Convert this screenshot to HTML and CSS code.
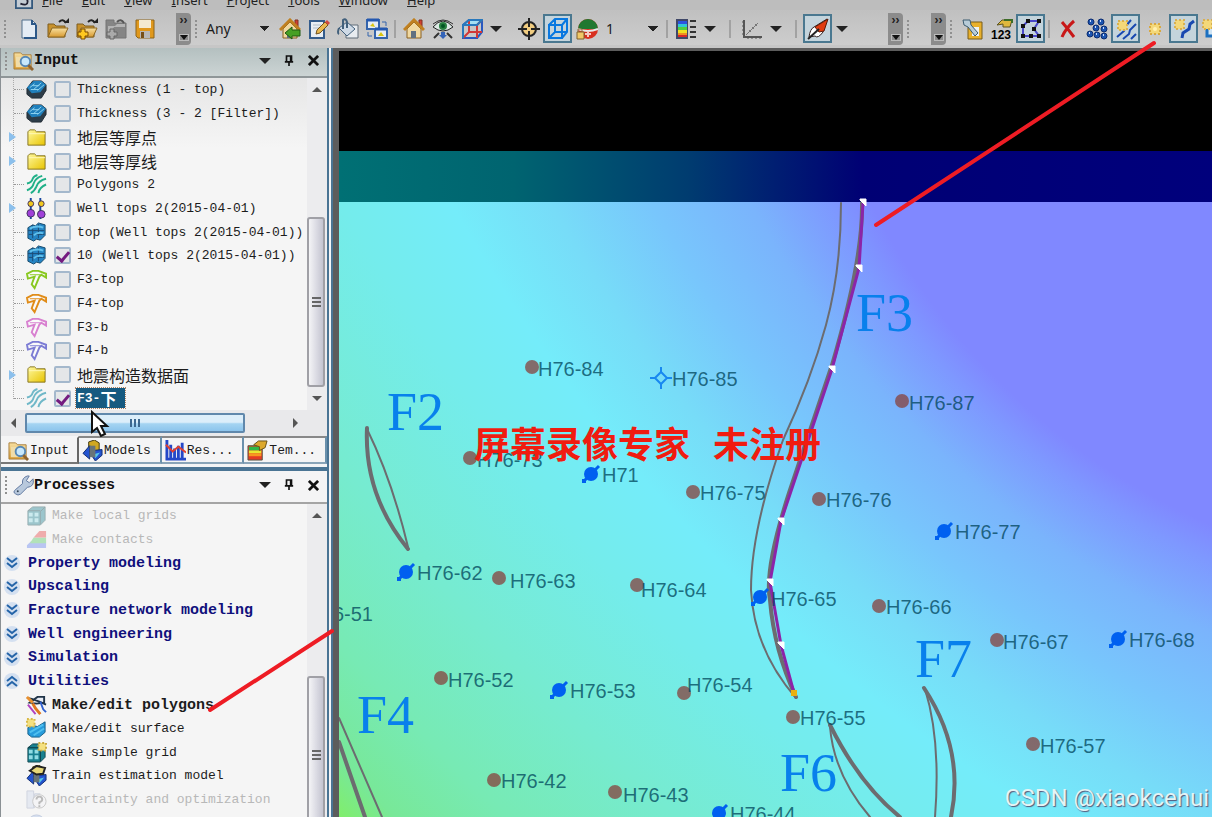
FILE: index.html
```
<!DOCTYPE html>
<html lang="en">
<head>
    <meta charset="utf-8">
    <title>Polygon editing</title>
    <link rel="stylesheet" href="styles.css">
</head>
<body>
    <!-- icon set -->
    <svg class="sprite" aria-hidden="true">
        <defs>
            <linearGradient id="gold" x1="0" y1="0" x2="0" y2="1"><stop offset="0" stop-color="#f8e0a0"/><stop offset="1" stop-color="#d89a30"/></linearGradient>
            <linearGradient id="yellow" x1="0" y1="0" x2="1" y2="1"><stop offset="0" stop-color="#fff9a0"/><stop offset="1" stop-color="#e8c400"/></linearGradient>
        </defs>
        <symbol id="i-new" viewBox="0 0 22 22"><path d="M4 2h10l4 4v14H4z" fill="#e4ecf4" stroke="#52708c"/><path d="M14 2v4h4M18 7v13H6" fill="none" stroke="#2c5888" stroke-width="2"/></symbol>
        <symbol id="i-open" viewBox="0 0 22 22"><path d="M1 19V6h6l2 2h9v11z" fill="#c8922c" stroke="#7c5c20"/><path d="M1 19l4-9h16l-4 9z" fill="url(#gold)" stroke="#8c6824"/><path d="M12 4q4-4 7 1" fill="none" stroke="#222" stroke-width="2"/><path d="M17 5h5V0z" fill="#222"/></symbol>
        <symbol id="i-plus" viewBox="0 0 22 22"><path d="M5 11h4v3h3v4H9v3H5v-3H2v-4h3z" fill="#ffc820" stroke="#7c4c00"/></symbol>
        <symbol id="i-gray" viewBox="0 0 22 22"><path d="M1 2h8v3h12v15H1z" fill="#858585" stroke="#747474"/><path d="M3 8h7l2-2h8v3H9l-4 9H3z" fill="#b4b4b4"/><path d="M5 11h4v3h3v4H9v3H5v-3H2v-4h3z" fill="#aaa" stroke="#666"/><path d="M12 4q4-4 7 1" fill="none" stroke="#555" stroke-width="2"/></symbol>
        <symbol id="i-save" viewBox="0 0 22 22"><path d="M2 2h18v18H4l-2-2z" fill="#e0981c" stroke="#8c641c"/><path d="M5 2h12v8H5z" fill="#f4ead0"/><path d="M6 13h10v7H6z" fill="#b8b8b8"/><path d="M7 14h3v6H7z" fill="#785018"/></symbol>
        <symbol id="i-home" viewBox="0 0 22 22"><path d="M16 2h3v8h-3z" fill="#d04030" stroke="#803020"/><path d="M4 11v9h14v-9l-7-7z" fill="#f0d8a0" stroke="#8a6020"/><path d="M1 12L11 2l10 10" fill="none" stroke="#c08020" stroke-width="3"/><path d="M8 13h5v7H8z" fill="#607080"/></symbol>
        <symbol id="i-homeadd" viewBox="0 0 22 22"><use href="#i-home"/><path d="M6 15l7-6v3h8v6h-8v3z" fill="#46a024" stroke="#205810"/></symbol>
        <symbol id="i-edit" viewBox="0 0 22 22"><path d="M2 3h14v17H2z" fill="#e8eef4" stroke="#345c8c" stroke-width="2"/><path d="M5 7h8M5 10h6" stroke="#b0bcc8"/><path d="M8 16l1-4 8-8 3 3-8 8z" fill="#e8b850" stroke="#70501c"/><path d="M17 4l2-2 3 3-2 2z" fill="#d04840"/></symbol>
        <symbol id="i-bucket" viewBox="0 0 22 22"><path d="M9 7h12v13H9z" fill="#e8ecf0" stroke="#606c78"/><path d="M2 10l8-6 8 7-8 7z" fill="#cfdae6" stroke="#42607c"/><path d="M6 11V2q3-2 4 2v6M2 10q-2 5 0 6" fill="none" stroke="#42607c" stroke-width="2"/></symbol>
        <symbol id="i-swap" viewBox="0 0 22 22"><path d="M1 2h12v9H1zM9 11h12v9H9z" fill="#e4ecf4" stroke="#3464ac" stroke-width="2"/><path d="M1 2h12M9 11h12" stroke="#2458b0" stroke-width="3"/><path d="M4 8l3-3 2 4zM12 18l3-4 3 4z" fill="#d8c410"/><path d="M16 4h4v4M2 14v4h4" fill="none" stroke="#3464ac"/></symbol>
        <symbol id="i-eye" viewBox="0 0 22 22"><path d="M1 9q10-12 20 0-10 8-20 0z" fill="#dce8e4" stroke="#222"/><path d="M1 6Q11-2 21 6" fill="none" stroke="#333"/><circle cx="11" cy="8" r="4" fill="#288040"/><circle cx="11" cy="8" r="2" fill="#052"/><path d="M2 20l5-5M20 20l-5-5" stroke="#333" stroke-width="2"/><path d="M9 14h4v3h2l-4 4-4-4h2z" fill="#3464b8"/></symbol>
        <symbol id="i-cube" viewBox="0 0 22 22"><path d="M2 7l6-5h13l-5 5z" fill="#a4e0f4"/><g fill="none" stroke-width="2"><path d="M2 7h14v13H2zM2 7l6-5h13v12l-5 6" stroke="#2858c0"/><path d="M2 20l6-6h13M8 2v12M16 20V7l5-5" stroke="#d03838"/><path d="M2 20V7h14l5-5H8L2 7" stroke="#2878bc"/></g></symbol>
        <symbol id="i-target" viewBox="0 0 22 22"><circle cx="11" cy="11" r="7" fill="#f0cc80" stroke="#222" stroke-width="2"/><path d="M11 0v9M11 13v9M0 11h9M13 11h9" stroke="#222" stroke-width="2"/></symbol>
        <symbol id="i-wire" viewBox="0 0 22 22"><path d="M2 7h13v13H2zM2 7l6-6h12v13l-5 6M15 7l5-6M8 1v13h12M8 14l-6 6" fill="none" stroke="#0878e0" stroke-width="2"/></symbol>
        <symbol id="i-globe" viewBox="0 0 22 22"><circle cx="12" cy="11" r="10" fill="#d83020"/><path d="M2 11a10 10 0 0 1 20 0z" fill="#207830"/><path d="M2 11q10 4 20 0" fill="none" stroke="#e8e8e8" stroke-width="2"/><path d="M9 16h6M12 13v6" stroke="#f4c8c0" stroke-width="2"/><path d="M1 14h7v7H1z" fill="#f0c868" stroke="#80602c"/><path d="M2 14v-3h4v3" fill="none" stroke="#886830"/></symbol>
        <symbol id="i-palette" viewBox="0 0 22 22"><path d="M1 1h12v20H1z" fill="#404868"/><path d="M3 3h9v3H3z" fill="#2c54e0"/><path d="M3 6h9v3H3z" fill="#30c8d8"/><path d="M3 9h9v3H3z" fill="#50d040"/><path d="M3 12h9v3H3z" fill="#f0e020"/><path d="M3 15h9v2H3z" fill="#f09020"/><path d="M3 17h9v2H3z" fill="#d82828"/><path d="M15 3h6M15 9h6M15 14h6M15 19h6" stroke="#333" stroke-width="2"/></symbol>
        <symbol id="i-axes" viewBox="0 0 22 22"><path d="M3 2v17h18" fill="none" stroke="#555" stroke-width="2"/><path d="M1 4h3M1 8h3M1 12h3M1 16h3M7 18v3M11 18v3M15 18v3M19 18v3" stroke="#555"/><path d="M5 17L17 5M8 12l2 2M11 9l2 2M14 6l2 2" stroke="#777"/></symbol>
        <symbol id="i-pen" viewBox="0 0 22 22"><path d="M2 19q1-8 5-10l13-8-4 13q-5 7-8 4z" fill="#fff" stroke="#302020"/><path d="M8 9L21 1l-4 12-5 1z" fill="#e03c10" stroke="#601c08"/><path d="M1 21L12 11" stroke="#222" stroke-width="2"/></symbol>
        <symbol id="i-wand" viewBox="0 0 22 22"><path d="M8 4h12v17H6V10z" fill="#e8b02c" stroke="#785c18"/><path d="M10 9h7v9h-7z" fill="#eef2f4"/><path d="M1 2h7l1 5 7 8-3 3-7-9-4-2z" fill="#b8ccd8" stroke="#3c5c70"/></symbol>
        <symbol id="i-num" viewBox="0 0 22 22"><path d="M6 7l5-5h10l-2 7h-7v-3z" fill="#dfb83c" stroke="#5c5420"/><path d="M13 2h8v3" fill="none" stroke="#3c6c28" stroke-width="2"/><text x="0" y="21" class="icon-num">123</text></symbol>
        <symbol id="i-nodes" viewBox="0 0 22 22"><path d="M3 18V8l5-5h11l-5 8 5 7z" fill="none" stroke="#4848c8" stroke-width="2"/><path d="M1 6h4v4H1zM6 1h4v4H6zM17 1h4v4h-4zM12 9h4v4h-4zM17 16h4v4h-4zM1 16h4v4H1zM9 16h4v4H9z" fill="#111"/></symbol>
        <symbol id="i-del" viewBox="0 0 22 22"><path d="M5 4q6 7 12 15M17 3Q9 10 5 19" fill="none" stroke="#c81818" stroke-width="3"/></symbol>
        <symbol id="i-dots" viewBox="0 0 22 22"><g fill="#1c54b0" stroke="#0c2c70"><circle cx="5" cy="4" r="3"/><circle cx="15" cy="4" r="3"/><circle cx="10" cy="10" r="3"/><circle cx="18" cy="11" r="3"/><circle cx="4" cy="16" r="3"/><circle cx="11" cy="17" r="3"/><circle cx="18" cy="18" r="3"/></g><path d="M4 3h1M14 3h1M9 9h1M17 10h1M3 15h1M10 16h1M17 17h1" stroke="#cdf" stroke-width="2"/></symbol>
        <symbol id="i-star" viewBox="0 0 22 22"><path d="M6 6h10v10H6z" fill="#f4d878"/><path d="M6 6h10v10H6z" fill="none" stroke="#d8a840" stroke-width="2" stroke-dasharray="2 2"/><circle cx="11" cy="11" r="2" fill="#fff0b0"/></symbol>
        <symbol id="i-lines" viewBox="0 0 22 22"><path d="M2 19l7-6 1-4 6-7M8 21l6-5 1-4 6-6M16 21l5-5" fill="none" stroke="#1848b0" stroke-width="2"/><path d="M3 3h9v9H3z" fill="#f4d878" stroke="#d8b050" stroke-width="2" stroke-dasharray="2 2"/></symbol>
        <symbol id="i-line" viewBox="0 0 22 22"><path d="M9 20l1-5 6-4 1-5 4-3" fill="none" stroke="#1848b0" stroke-width="3"/><path d="M2 2h9v9H2z" fill="#f4d878" stroke="#d8b050" stroke-width="2" stroke-dasharray="2 2"/></symbol>
        <symbol id="i-box" viewBox="0 0 22 22"><path d="M5 9v9h16V8" fill="#cfe4f4" stroke="#1c70c0" stroke-width="3"/><path d="M1 2h9v9H1z" fill="#f4d878" stroke="#d8b050" stroke-width="2" stroke-dasharray="2 2"/></symbol>
        <symbol id="i-search" viewBox="0 0 22 22"><path d="M1 20V3h7l2 2h9v15z" fill="url(#gold)" stroke="#a88040"/><path d="M3 7h15v11H3z" fill="#f0dca8"/><circle cx="13" cy="12" r="5" fill="#c8e8fc" stroke="#5888b4" stroke-width="2"/><path d="M16 16l5 5" stroke="#906430" stroke-width="3"/></symbol>
        <symbol id="i-wrench" viewBox="0 0 22 22"><path d="M3 20q-4-2 0-5l7-6q-1-6 5-8h2l-3 5 3 2 4-4q2 8-6 9l-7 7q-3 2-5 0z" fill="#b8c8dc" stroke="#6078a0"/><circle cx="5" cy="17" r="1" fill="#345"/></symbol>
        <symbol id="i-thick" viewBox="0 0 22 22"><path d="M1 10l6-8h9l5 4v6l-5 8H6l-5-4z" fill="#2c3c48" stroke="#222c34"/><path d="M1 9l7-7h8l5 4-6 8-9 1z" fill="#2080bc"/><path d="M4 9l5-4M8 11l8-7M12 12l7-6M7 7h7M5 11h8" stroke="#90d4f0"/></symbol>
        <symbol id="i-surf" viewBox="0 0 22 22"><path d="M2 6l5-3 3 1 3-3 7 2v11l-5 5-4-1-3 2-6-3z" fill="#2484c4" stroke="#184868"/><path d="M7 3v14M13 2v15M2 9h17M3 13h16" stroke="#1c4c74"/><path d="M4 7q7-4 14-1M8 14q5-4 10-2" fill="none" stroke="#60c0ec" stroke-width="2"/></symbol>
        <symbol id="i-folder" viewBox="0 0 22 22"><path d="M2 19V5l2-2h5l2 2h9v14z" fill="url(#yellow)" stroke="#847424"/><path d="M3 7h17" stroke="#fff8b8"/></symbol>
        <symbol id="i-waves" viewBox="0 0 22 22"><path d="M1 10q5-1 6-5 1-3 5-4M1 17q6-2 7-7 2-6 9-8M5 20q4-2 6-7 2-6 10-8M13 20q1-6 8-9" fill="none" stroke="currentColor" stroke-width="2"/></symbol>
        <symbol id="i-tops" viewBox="0 0 22 22"><path d="M5 0v22M15 0v22" stroke="#1848a0" stroke-width="2"/><g stroke="#403060"><circle cx="5" cy="6" r="3" fill="#f0c820"/><circle cx="16" cy="6" r="3" fill="#f0c820"/><circle cx="5" cy="16" r="4" fill="#a040d8"/><circle cx="16" cy="17" r="4" fill="#a040d8"/></g></symbol>
        <symbol id="i-fault" viewBox="0 0 22 22"><path d="M1 5l6-3h6l8 3v4l-5-3-2 2-5 12-3-4 3-8-7 2z" fill="#fff" fill-opacity=".5" stroke="currentColor" stroke-width="2"/><path d="M4 6h11" stroke="currentColor"/></symbol>
        <symbol id="i-models" viewBox="0 0 22 22"><path d="M7 2l6-2 5 3v9H7z" fill="#d0a820" stroke="#403810"/><path d="M1 14l7-8v14zM12 11l9-1v6l-7 6-4-6z" fill="#2454d0" stroke="#102c70"/><path d="M12 15l7-2-5 6z" fill="#58c8e8"/><path d="M8 6h6v12H8z" fill="#687478"/></symbol>
        <symbol id="i-res" viewBox="0 0 22 22"><path d="M2 0v20h20M6 20V5M10 20V9M14 20V6M18 20V3" fill="none" stroke="#2448c8" stroke-width="3"/><path d="M1 5l7 7 6-5 8 6" fill="none" stroke="#e04030" stroke-width="2"/></symbol>
        <symbol id="i-tem" viewBox="0 0 22 22"><path d="M1 6h15v15H1z" fill="#e43c24" stroke="#554"/><path d="M2 7h13v4H2z" fill="#30b848"/><path d="M2 11h13v3H2z" fill="#e8e830"/><path d="M2 14h13v3H2z" fill="#f89820"/><path d="M7 5l5-4h9l-2 7-6 3V7z" fill="#dca82c" stroke="#665018"/></symbol>
        <symbol id="i-grid" viewBox="0 0 22 22"><path d="M2 6l5-4h13v14l-5 5H2z" fill="#188090" stroke="#124850"/><path d="M3 8h4v4H3zM9 8h4v4H9zM3 14h4v4H3zM9 14h4v4H9z" fill="#90dce4"/><path d="M15 7l5-5M15 7v13M2 6h13" stroke="#0c3840"/></symbol>
        <symbol id="i-contacts" viewBox="0 0 22 22"><path d="M1 20v-3l4-4h16v7z" fill="#6080f0"/><path d="M4 15l4-6h13v6z" fill="#50c860"/><path d="M8 9l6-7h7v7z" fill="#e84040"/></symbol>
        <symbol id="i-poly" viewBox="0 0 22 22"><path d="M1 3l5 1 8 3 7 3M4 8l8-6h7v6l-8 1z" fill="#e8ecf4" stroke="#203448" stroke-width="2"/><path d="M2 10l8 10" stroke="#b040c0" stroke-width="2"/><path d="M7 9l3 5 5 6" fill="none" stroke="#e07820" stroke-width="3"/><path d="M15 7l3 8 3 3" fill="none" stroke="#3060d0" stroke-width="2"/><path d="M1 2l6 6" stroke="#e89030" stroke-width="3"/></symbol>
        <symbol id="i-mksurf" viewBox="0 0 22 22"><path d="M2 10l6-2 4 1 8-5v11l-6 5H6l-4-3z" fill="#289cdc" stroke="#186088"/><path d="M4 15l14-8M8 18l11-7" stroke="#50c0f0" stroke-width="2"/><path d="M1 1h8v8H1z" fill="#f4e080" stroke="#d8b848" stroke-width="2" stroke-dasharray="2 2"/></symbol>
        <symbol id="i-mkgrid" viewBox="0 0 22 22"><use href="#i-grid"/><path d="M13 1h8v8h-8z" fill="#f4e080" stroke="#c8a840" stroke-width="2" stroke-dasharray="2 2"/></symbol>
        <symbol id="i-train" viewBox="0 0 22 22"><use href="#i-models"/><path d="M4 6l7-5 9 2-2 6-7 1z" fill="#e8d878" stroke="#222" stroke-width="2"/></symbol>
        <symbol id="i-unc" viewBox="0 0 22 22"><path d="M1 20V2h7v18zM9 20V5h6" fill="#cfd8ec" stroke="#98a4c0"/><circle cx="14" cy="13" r="7" fill="#f4f4f8" stroke="#888"/><path d="M11 11q0-3 3-3t3 3q0 2-3 3v2M14 17v2" fill="none" stroke="#666" stroke-width="2"/></symbol>
        <symbol id="i-ball" viewBox="0 0 22 22"><circle cx="11" cy="11" r="9" fill="#a8c0e8" stroke="#7890c0"/></symbol>
        <symbol id="i-down" viewBox="0 0 18 18"><circle cx="9" cy="9" r="8" fill="#d4e0f0"/><path d="M4 4l5 4 5-4M4 9l5 4 5-4" fill="none" stroke="#2464a8" stroke-width="2"/></symbol>
        <symbol id="i-up" viewBox="0 0 18 18"><circle cx="9" cy="9" r="8" fill="#d4e0f0"/><path d="M4 9l5-4 5 4M4 14l5-4 5 4" fill="none" stroke="#2464a8" stroke-width="2"/></symbol>
        <symbol id="i-pin" viewBox="0 0 12 14"><path d="M3 1h6v7H3zM1 8h10M6 8v5M8 1v7" fill="none" stroke="#111" stroke-width="2"/></symbol>
        <symbol id="i-close" viewBox="0 0 12 12"><path d="M1 1l10 10M11 1L1 11" stroke="#111" stroke-width="3"/></symbol>
        <symbol id="w-oil" viewBox="-12 -12 24 24"><circle r="7" fill="#87413c" fill-opacity=".75"/></symbol>
        <symbol id="w-inj" viewBox="-12 -12 24 24"><circle r="7" fill="#0060f0"/><path d="M-8 8L8-8" stroke="#0060f0" stroke-width="3"/><path d="M-9 5h4v4h-4z" fill="#0060f0"/></symbol>
    </svg>

    <nav class="menubar">
        <svg class="app-icon" viewBox="0 0 20 20"><path d="M1 1h18v18H1z" fill="#c4ccd4" stroke="#34587c" stroke-width="2"/><path d="M6 14q8 3 8-2t-6-3" fill="none" stroke="#223" stroke-width="2"/></svg>
        <a href="#"><u>F</u>ile</a>
        <a href="#"><u>E</u>dit</a>
        <a href="#"><u>V</u>iew</a>
        <a href="#"><u>I</u>nsert</a>
        <a href="#"><u>P</u>roject</a>
        <a href="#"><u>T</u>ools</a>
        <a href="#"><u>W</u>indow</a>
        <a href="#"><u>H</u>elp</a>
    </nav>

    <div class="toolbars">
        <div class="toolbar">
            <span class="grip"></span>
            <button aria-label="New"><svg><use href="#i-new"/></svg></button>
            <button aria-label="Open"><svg><use href="#i-open"/></svg></button>
            <button aria-label="Import"><svg><use href="#i-open"/><use href="#i-plus"/></svg></button>
            <button aria-label="Add" disabled><svg><use href="#i-gray"/></svg></button>
            <button aria-label="Save"><svg><use href="#i-save"/></svg></button>
            <button class="overflow" aria-label="More file tools"></button>
        </div>
        <div class="toolbar">
            <span class="grip"></span>
            <select class="pick-any" aria-label="Filter"><option>Any</option></select>
            <button aria-label="Add home"><svg><use href="#i-homeadd"/></svg></button>
            <button aria-label="Edit view"><svg><use href="#i-edit"/></svg></button>
            <button aria-label="Background"><svg><use href="#i-bucket"/></svg></button>
            <button aria-label="Copy view"><svg><use href="#i-swap"/></svg></button>
            <span class="sep"></span>
            <button aria-label="Home"><svg><use href="#i-home"/></svg></button>
            <button aria-label="View all"><svg><use href="#i-eye"/></svg></button>
            <button aria-label="View from"><svg><use href="#i-cube"/></svg></button>
            <button class="drop" aria-label="View options"></button>
            <span class="sep blank"></span>
            <button aria-label="Set focus"><svg><use href="#i-target"/></svg></button>
            <button class="on" aria-label="Wireframe"><svg><use href="#i-wire"/></svg></button>
            <button aria-label="Vertical scale"><svg><use href="#i-globe"/></svg></button>
            <select class="pick-scale" aria-label="Scale"><option>1</option></select>
            <span class="sep"></span>
            <button aria-label="Legend"><svg><use href="#i-palette"/></svg></button>
            <button class="drop" aria-label="Legend options"></button>
            <span class="sep wide"></span>
            <button aria-label="Axes"><svg><use href="#i-axes"/></svg></button>
            <button class="drop" aria-label="Axes options"></button>
            <span class="sep wide"></span>
            <button class="on" aria-label="North arrow"><svg><use href="#i-pen"/></svg></button>
            <button class="drop" aria-label="Arrow options"></button>
            <button class="overflow" aria-label="More view tools"></button>
        </div>
        <div class="toolbar">
            <span class="grip"></span>
            <button class="overflow" aria-label="More tools"></button>
        </div>
        <div class="toolbar">
            <span class="grip"></span>
            <button aria-label="Select"><svg><use href="#i-wand"/></svg></button>
            <button aria-label="Numbers"><svg><use href="#i-num"/></svg></button>
            <button class="on" aria-label="Edit nodes"><svg><use href="#i-nodes"/></svg></button>
            <span class="sep"></span>
            <button aria-label="Delete"><svg><use href="#i-del"/></svg></button>
            <button aria-label="Points"><svg><use href="#i-dots"/></svg></button>
            <button class="on" aria-label="Add lines"><svg><use href="#i-lines"/></svg></button>
            <button aria-label="New point"><svg><use href="#i-star"/></svg></button>
            <button class="on" aria-label="Add to line"><svg><use href="#i-line"/></svg></button>
            <button aria-label="New box"><svg><use href="#i-box"/></svg></button>
        </div>
    </div>

    <main class="workspace">
        <div class="side">
            <section class="panel input">
                <header>
                    <span class="grip"></span>
                    <svg class="icon"><use href="#i-search"/></svg>
                    <h2>Input</h2>
                    <button class="drop" aria-label="Input options"></button>
                    <button aria-label="Pin input"><svg class="pin"><use href="#i-pin"/></svg></button>
                    <button aria-label="Close input"><svg class="close"><use href="#i-close"/></svg></button>
                </header>
                <div class="scroll">
                    <ul class="tree">
                        <li><svg class="icon"><use href="#i-thick"/></svg><label><input type="checkbox"><span>Thickness (1 - top)</span></label></li>
                        <li><svg class="icon"><use href="#i-thick"/></svg><label><input type="checkbox"><span>Thickness (3 - 2 [Filter])</span></label></li>
                        <li class="parent"><svg class="icon"><use href="#i-folder"/></svg><label><input type="checkbox"><span class="cjk">地层等厚点</span></label></li>
                        <li class="parent"><svg class="icon"><use href="#i-folder"/></svg><label><input type="checkbox"><span class="cjk">地层等厚线</span></label></li>
                        <li><svg class="icon green"><use href="#i-waves"/></svg><label><input type="checkbox"><span>Polygons 2</span></label></li>
                        <li class="parent"><svg class="icon"><use href="#i-tops"/></svg><label><input type="checkbox"><span>Well tops 2(2015-04-01)</span></label></li>
                        <li><svg class="icon"><use href="#i-surf"/></svg><label><input type="checkbox"><span>top (Well tops 2(2015-04-01))</span></label></li>
                        <li><svg class="icon"><use href="#i-surf"/></svg><label><input type="checkbox" checked><span>10 (Well tops 2(2015-04-01))</span></label></li>
                        <li><svg class="icon lime"><use href="#i-fault"/></svg><label><input type="checkbox"><span>F3-top</span></label></li>
                        <li><svg class="icon orange"><use href="#i-fault"/></svg><label><input type="checkbox"><span>F4-top</span></label></li>
                        <li><svg class="icon pink"><use href="#i-fault"/></svg><label><input type="checkbox"><span>F3-b</span></label></li>
                        <li><svg class="icon violet"><use href="#i-fault"/></svg><label><input type="checkbox"><span>F4-b</span></label></li>
                        <li class="parent"><svg class="icon"><use href="#i-folder"/></svg><label><input type="checkbox"><span class="cjk">地震构造数据面</span></label></li>
                        <li><svg class="icon aqua"><use href="#i-waves"/></svg><label><input type="checkbox" checked><span class="selected">F3-<span class="cjk">下</span></span></label></li>
                    </ul>
                    <div class="vbar"><i class="up"></i><b class="space"></b><b class="thumb"></b><i class="down"></i></div>
                </div>
                <div class="hbar"><i class="left"></i><b class="thumb"></b><b class="space"></b><i class="right"></i></div>
                <div class="tabs">
                    <button class="active"><svg class="icon"><use href="#i-search"/></svg>Input</button>
                    <button><svg class="icon"><use href="#i-models"/></svg>Models</button>
                    <button><svg class="icon"><use href="#i-res"/></svg>Res...</button>
                    <button><svg class="icon"><use href="#i-tem"/></svg>Tem...</button>
                </div>
            </section>

            <section class="panel processes">
                <header>
                    <span class="grip"></span>
                    <svg class="icon"><use href="#i-wrench"/></svg>
                    <h2>Processes</h2>
                    <button class="drop" aria-label="Process options"></button>
                    <button aria-label="Pin processes"><svg class="pin"><use href="#i-pin"/></svg></button>
                    <button aria-label="Close processes"><svg class="close"><use href="#i-close"/></svg></button>
                </header>
                <div class="scroll">
                    <ul class="steps">
                        <li class="off"><svg class="icon"><use href="#i-grid"/></svg>Make local grids</li>
                        <li class="off"><svg class="icon"><use href="#i-contacts"/></svg>Make contacts</li>
                        <li class="group"><svg class="fold"><use href="#i-down"/></svg>Property modeling</li>
                        <li class="group"><svg class="fold"><use href="#i-down"/></svg>Upscaling</li>
                        <li class="group"><svg class="fold"><use href="#i-down"/></svg>Fracture network modeling</li>
                        <li class="group"><svg class="fold"><use href="#i-down"/></svg>Well engineering</li>
                        <li class="group"><svg class="fold"><use href="#i-down"/></svg>Simulation</li>
                        <li class="group"><svg class="fold"><use href="#i-up"/></svg>Utilities</li>
                        <li class="current"><svg class="icon"><use href="#i-poly"/></svg>Make/edit polygons</li>
                        <li><svg class="icon"><use href="#i-mksurf"/></svg>Make/edit surface</li>
                        <li><svg class="icon"><use href="#i-mkgrid"/></svg>Make simple grid</li>
                        <li><svg class="icon"><use href="#i-train"/></svg>Train estimation model</li>
                        <li class="off"><svg class="icon"><use href="#i-unc"/></svg>Uncertainty and optimization</li>
                        <li class="off"><svg class="icon"><use href="#i-ball"/></svg>Volume calculation</li>
                    </ul>
                    <div class="vbar"><i class="up"></i><b class="space"></b><b class="thumb"></b></div>
                </div>
            </section>
        </div>

        <div class="map">
            <svg viewBox="339 51 873 766" preserveAspectRatio="xMinYMin slice">
                <defs>
                    <radialGradient id="depth" gradientUnits="userSpaceOnUse" cx="2480" cy="-1300" r="3010" fx="1480" fy="-100" fr="680">
                        <stop offset="0" stop-color="#8088ff"/>
                        <stop offset="0.04" stop-color="#7e98ff"/>
                        <stop offset="0.12" stop-color="#7ab4fc"/>
                        <stop offset="0.22" stop-color="#78c6fc"/>
                        <stop offset="0.32" stop-color="#77dcf8"/>
                        <stop offset="0.42" stop-color="#74ecfa"/>
                        <stop offset="0.53" stop-color="#74ecec"/>
                        <stop offset="0.7" stop-color="#76ebd0"/>
                        <stop offset="0.85" stop-color="#77eab4"/>
                        <stop offset="0.95" stop-color="#78e898"/>
                        <stop offset="1" stop-color="#80ee6c"/>
                    </radialGradient>
                    <linearGradient id="edge">
                        <stop offset="0" stop-color="#007074"/>
                        <stop offset="0.2" stop-color="#006470"/>
                        <stop offset="0.4" stop-color="#003c70"/>
                        <stop offset="0.6" stop-color="#000074"/>
                        <stop offset="1" stop-color="#00007c"/>
                    </linearGradient>
                </defs>
                <rect x="339" y="151" width="873" height="52" fill="url(#edge)"/>
                <rect x="339" y="202" width="873" height="615" fill="url(#depth)"/>

                <!-- fault traces -->
                <g class="fault thin">
                    <path d="M841 203Q841 270 826 325T783 440Q751 530 751 590 754 650 796 698"/>
                    <path d="M367 429Q392 480 408 547"/>
                    <path d="M339 718L382 817"/>
                    <path d="M830 727Q834 775 870 817"/>
                    <path d="M925 689Q941 740 935 817"/>
                </g>
                <g class="fault">
                    <path d="M862 203Q863 260 832 365L789 493Q764 570 770 600 774 650 796 697"/>
                    <path d="M367 428Q364 495 408 549"/>
                    <path d="M339 742L365 817"/>
                    <path d="M830 725Q860 785 900 817"/>
                    <path d="M924 688Q965 750 951 817"/>
                </g>
                <polyline class="edited" points="863,203 859,268 832,369 781,521 770,582 781,645 794,693"/>
                <path class="handles" d="M860 199h6v7l-6-6zM856 265h6v7l-6-6zM829 366h6v7l-6-6zM778 518h6v7l-6-6zM767 579h6v7l-6-6zM778 642h6v7l-6-6z"/>
                <rect x="791" y="690" width="6" height="6" fill="#e8b010"/>

                <g class="names">
                    <text x="387" y="430">F2</text>
                    <text x="856" y="331">F3</text>
                    <text x="357" y="733">F4</text>
                    <text x="780" y="791">F6</text>
                    <text x="915" y="677">F7</text>
                </g>

                <g class="wells">
                    <use href="#w-oil" x="520" y="355" width="24" height="24"/><text x="538" y="376">H76-84</text>
                    <use href="#w-oil" x="458" y="446" width="24" height="24"/><text x="477" y="467">H76-73</text>
                    <use href="#w-oil" x="681" y="480" width="24" height="24"/><text x="700" y="500">H76-75</text>
                    <use href="#w-oil" x="807" y="487" width="24" height="24"/><text x="826" y="507">H76-76</text>
                    <use href="#w-oil" x="890" y="389" width="24" height="24"/><text x="909" y="410">H76-87</text>
                    <use href="#w-oil" x="487" y="566" width="24" height="24"/><text x="510" y="588">H76-63</text>
                    <use href="#w-oil" x="625" y="573" width="24" height="24"/><text x="641" y="597">H76-64</text>
                    <use href="#w-oil" x="867" y="594" width="24" height="24"/><text x="886" y="614">H76-66</text>
                    <use href="#w-oil" x="985" y="628" width="24" height="24"/><text x="1003" y="649">H76-67</text>
                    <use href="#w-oil" x="429" y="666" width="24" height="24"/><text x="448" y="687">H76-52</text>
                    <use href="#w-oil" x="672" y="681" width="24" height="24"/><text x="687" y="692">H76-54</text>
                    <use href="#w-oil" x="781" y="705" width="24" height="24"/><text x="800" y="725">H76-55</text>
                    <use href="#w-oil" x="1021" y="732" width="24" height="24"/><text x="1040" y="753">H76-57</text>
                    <use href="#w-oil" x="482" y="768" width="24" height="24"/><text x="501" y="788">H76-42</text>
                    <use href="#w-oil" x="603" y="780" width="24" height="24"/><text x="623" y="802">H76-43</text>
                    <use href="#w-inj" x="579" y="462" width="24" height="24"/><text x="602" y="482">H71</text>
                    <use href="#w-inj" x="394" y="560" width="24" height="24"/><text x="417" y="580">H76-62</text>
                    <use href="#w-inj" x="748" y="585" width="24" height="24"/><text x="771" y="606">H76-65</text>
                    <use href="#w-inj" x="932" y="519" width="24" height="24"/><text x="955" y="539">H76-77</text>
                    <use href="#w-inj" x="1106" y="627" width="24" height="24"/><text x="1129" y="647">H76-68</text>
                    <use href="#w-inj" x="547" y="678" width="24" height="24"/><text x="570" y="698">H76-53</text>
                    <use href="#w-inj" x="707" y="801" width="24" height="24"/><text x="730" y="821">H76-44</text>
                    <text x="373" y="621" text-anchor="end">H76-51</text>
                    <path d="M661 367v5M661 383v6M650 378h5M667 378h5M655 378l6-6 6 6-6 6z" fill="none" stroke="#1888f0" stroke-width="2"/><text x="672" y="386">H76-85</text>
                </g>

                <g class="recorder">
                    <text x="474" y="458">屏幕录像专家</text>
                    <text x="713" y="458">未注册</text>
                </g>
            </svg>
            <span class="credit">CSDN @xiaokcehui</span>
        </div>
    </main>

    <!-- red pointer lines and mouse cursor over the window -->
    <svg class="notes" aria-hidden="true">
        <path d="M210 710L332 631M876 225L1154 43" stroke="#ee1c24" stroke-width="4" stroke-linecap="round"/>
        <path d="M92 412v20l5-4 4 8 4-2-4-8h6z" fill="#fff" stroke="#111" stroke-width="2"/>
    </svg>
</body>
</html>
```
FILE: styles.css
```
* {
    box-sizing: border-box;
}
body {
    margin: 0;
    height: 100vh;
    display: flex;
    flex-direction: column;
    overflow: hidden;
    position: relative;
    background: #c6c6c6;
    color: #1c1c1c;
    font-family: "Liberation Mono", "Noto Sans CJK SC", monospace;
    font-size: 13px;
}
button, select {
    font: inherit;
    color: inherit;
    border: 0;
    padding: 0;
    background: none;
}
ul {
    list-style: none;
    margin: 0;
    padding: 0;
}
.sprite {
    position: absolute;
    width: 0;
    height: 0;
}
.icon-num {
    font: bold 12px "Liberation Sans", sans-serif;
}

/* menu, scrolled half out of the window */
.menubar {
    display: flex;
    align-items: center;
    gap: 19px;
    height: 20px;
    margin-top: -10px;
    padding-left: 15px;
    background: #bdbdbd;
    font-family: "Noto Sans", sans-serif;
    flex: none;
}
.menubar a {
    color: #222;
    text-decoration: none;
    line-height: 20px;
}
.app-icon {
    width: 18px;
    height: 18px;
    margin-right: -10px;
}

/* toolbars */
.toolbars {
    display: grid;
    grid-template-columns: 191px 712px 43px 1fr;
    height: 35px;
    flex: none;
    background: linear-gradient(#c0c0c0, #cdcdcd);
    overflow: hidden;
}
.toolbar {
    display: flex;
    align-items: center;
    padding-top: 2px;
    min-width: 0;
}
.grip {
    flex: none;
    width: 2px;
    height: 18px;
    margin: 0 6px 0 4px;
    background: repeating-linear-gradient(#909090 0 2px, transparent 2px 4px);
}
.toolbar:first-child .grip {
    margin-right: 8px;
}
.toolbar button {
    flex: none;
    width: 29px;
    height: 29px;
    display: flex;
    align-items: center;
    justify-content: center;
}
.toolbar svg {
    width: 22px;
    height: 22px;
}
.toolbar .on {
    border: 2px solid #4a7890;
    background: #c4d4dc;
}
.drop::before {
    content: "";
    border: 6px solid transparent;
    border-top-color: #222;
    border-bottom: 0;
}
.toolbar .drop {
    width: 20px;
}
.toolbar .overflow {
    width: 15px;
    height: 32px;
    margin-left: auto;
    flex-direction: column;
    justify-content: space-between;
    padding: 3px 0 5px;
    background: #8c8c8c;
    border-radius: 0 4px 4px 0;
}
.overflow::before {
    content: "››";
    font: bold 12px/9px "Liberation Sans", sans-serif;
}
.overflow::after {
    content: "";
    border: 4px solid transparent;
    border-top: 5px solid #111;
    border-bottom: 0;
    outline: 1px solid #bbb;
}
.sep {
    flex: none;
    width: 2px;
    height: 18px;
    margin: 0 3px;
    background: #a2a2a2;
}
.sep.wide {
    margin: 0 6px 0 9px;
}
.sep.blank {
    background: none;
}
.toolbar select {
    appearance: none;
    flex: none;
    height: 24px;
    font-family: "Noto Sans", sans-serif;
    font-size: 14px;
    background:
        linear-gradient(45deg, transparent 50%, #222 50%) right 10px top 9px / 5px 5px no-repeat,
        linear-gradient(-45deg, transparent 50%, #222 50%) right 5px top 9px / 5px 5px no-repeat;
}
.pick-any {
    width: 72px;
    padding-left: 3px;
}
.pick-scale {
    width: 62px;
    padding-left: 5px;
}

/* side panels */
.workspace {
    flex: 1;
    min-height: 0;
    margin-top: 3px;
    display: grid;
    grid-template-columns: 333px 1fr;
}
.side {
    display: grid;
    grid-template-rows: 23fr 19fr;
    min-height: 0;
    border-left: 1px solid #8a9094;
    border-right: 6px double #4a7494;
    background: #f4f4f5;
}
.panel {
    display: flex;
    flex-direction: column;
    min-height: 0;
    min-width: 0;
}
.panel header {
    display: flex;
    align-items: center;
    flex: none;
    height: 30px;
    padding: 0 2px 3px 0;
    border-bottom: 2px solid #8f9698;
    background: linear-gradient(#b4c0c0, #ccd4d4);
}
.processes header {
    height: 35px;
    border-top: 2px solid #4a7494;
    border-bottom-color: #a4a4a4;
    background: #f4f4f5;
}
.panel h2 {
    flex: 1;
    margin: 0;
    font-size: 15px;
    color: #111;
}
.panel header button {
    width: 24px;
    height: 20px;
    display: flex;
    align-items: center;
    justify-content: center;
}
.icon {
    width: 21px;
    height: 21px;
    flex: none;
}
.pin {
    width: 10px;
    height: 12px;
}
.close {
    width: 11px;
    height: 11px;
}
.scroll {
    flex: 1;
    min-height: 0;
    display: grid;
    grid-template-columns: 1fr 20px;
    background: linear-gradient(#e6e6e6, #f5f5f5 70px);
    overflow: hidden;
}
.tree, .steps {
    display: grid;
    grid-auto-rows: 1fr;
    min-width: 0;
    min-height: 0;
}
.tree {
    background: repeating-linear-gradient(#aaa 0 1px, transparent 1px 2px) 12px 0 / 1px 97% no-repeat;
}
.tree li {
    display: flex;
    align-items: center;
    min-height: 0;
    white-space: nowrap;
}
.tree li::before {
    content: "";
    width: 10px;
    margin: 0 2px 0 13px;
    border-top: 1px dotted #999;
}
.tree .parent::before {
    width: 0;
    height: 0;
    margin: 0 10px 0 8px;
    border: 5px solid transparent;
    border-left: 7px solid #8cc0ec;
    border-right: 0;
}
.tree label {
    display: flex;
    align-items: center;
    gap: 6px;
    margin-left: 7px;
}
.tree input {
    appearance: none;
    flex: none;
    width: 17px;
    height: 17px;
    margin: 0;
    border: 2px solid #a4b8cc;
    border-radius: 2px;
    background: #e4e6e8;
    display: grid;
    place-items: center;
}
.tree input:checked::before {
    content: "";
    width: 5px;
    height: 10px;
    border: solid #741c80;
    border-width: 0 3px 3px 0;
    transform: rotate(40deg);
}
.cjk {
    font-family: "Noto Sans CJK SC", sans-serif;
    font-size: 16px;
    line-height: 20px;
}
.selected {
    display: flex;
    align-items: center;
    height: 20px;
    margin-left: -1px;
    padding: 0 9px 0 1px;
    background: #165a80;
    color: #fff;
    font-weight: bold;
    outline: 1px dotted #b08060;
}
.green { color: #20b088; }
.aqua { color: #70b8c8; }
.lime { color: #88c820; }
.orange { color: #e08c18; }
.pink { color: #d880d0; }
.violet { color: #7c7cd4; }

/* scroll bars */
.vbar {
    display: flex;
    flex-direction: column;
    background: #ececee;
    min-height: 0;
}
.vbar i, .hbar i {
    flex: none;
    display: grid;
    place-items: center;
}
.vbar i {
    height: 23px;
}
.vbar i::before, .hbar i::before {
    content: "";
    border: 5px solid transparent;
}
.vbar .up::before {
    border-bottom-color: #555;
    border-top: 0;
}
.vbar .down::before {
    border-top-color: #555;
    border-bottom: 0;
}
.vbar .space {
    flex: 118;
}
.vbar .thumb {
    flex: 168;
    width: 18px;
    border: 2px solid #a0a0a6;
    border-radius: 3px;
    background: linear-gradient(90deg, #f4f4f6, #dcdce4 50%, #c4c4d0);
    display: grid;
    place-items: center;
}
.vbar .thumb::before {
    content: "";
    width: 9px;
    height: 11px;
    background: repeating-linear-gradient(#666 0 2px, transparent 2px 4px);
}
.hbar {
    flex: none;
    display: flex;
    height: 26px;
    padding: 3px 20px 3px 0;
    background: #e9e9eb;
}
.hbar i {
    width: 24px;
}
.hbar .left::before {
    border-right-color: #555;
    border-left: 0;
}
.hbar .right::before {
    border-left-color: #555;
    border-right: 0;
}
.hbar .thumb {
    flex: 218;
    border: 2px solid #6088ac;
    border-radius: 2px;
    background: linear-gradient(#dceefa 45%, #a4d4f2 55%, #8cc4ec);
    display: grid;
    place-items: center;
}
.hbar .thumb::before {
    content: "";
    width: 11px;
    height: 8px;
    background: repeating-linear-gradient(90deg, #3c6890 0 2px, transparent 2px 4px);
}
.hbar .space {
    flex: 38;
}

.tabs {
    flex: none;
    display: flex;
    height: 33px;
    border-bottom: 2px solid #4a7494;
    padding-bottom: 3px;
}
.tabs button {
    display: flex;
    align-items: center;
    gap: 1px;
    flex: 1;
    border-top: 2px solid #888;
    border-bottom: 2px solid #8aa4b8;
    border-right: 2px solid #6a90ac;
    padding-left: 3px;
}
.tabs .active {
    flex: none;
    width: 78px;
    border-top-color: #f4f4f5;
    border-right-color: #666;
    border-bottom-color: #777;
    padding-left: 7px;
}

/* the step list runs on below the window */
.steps, .processes .vbar {
    height: calc(100% + 18px);
}
.processes .scroll {
    background: #f5f5f5;
}
.steps li {
    display: flex;
    align-items: center;
    gap: 5px;
    padding-left: 25px;
    white-space: nowrap;
}
.steps .group {
    gap: 7px;
    padding-left: 2px;
    color: #10107c;
    font-size: 15px;
    font-weight: bold;
}
.steps .current {
    font-size: 15px;
    font-weight: bold;
}
.steps .off {
    color: #b8b8b8;
}
.steps .off svg {
    opacity: 0.4;
}
.fold {
    width: 18px;
    height: 18px;
}
.processes .space {
    flex: 151;
}
.processes .thumb {
    flex: 158;
}

/* map window */
.map {
    position: relative;
    min-width: 0;
    min-height: 0;
    border: solid #5c5c5c;
    border-width: 3px 0 0 6px;
    background: #000;
    overflow: hidden;
}
.map svg {
    display: block;
    width: 100%;
    height: 100%;
}
.fault {
    fill: none;
    stroke: #6c6c70;
    stroke-width: 4;
    stroke-linecap: round;
}
.fault.thin {
    stroke-width: 2;
}
.edited {
    fill: none;
    stroke: #8c24a8;
    stroke-width: 3;
}
.handles {
    fill: #fff;
    stroke: #fff;
}
.names {
    font: 54px "Liberation Serif", serif;
    fill: #0880ec;
}
.wells {
    font: 20px "Liberation Sans", sans-serif;
}
.wells text {
    fill: #00445a;
    fill-opacity: 0.75;
}
.recorder {
    font: bold 36px "Noto Sans CJK SC", sans-serif;
    fill: #f01c10;
}
.credit {
    position: absolute;
    right: 3px;
    bottom: 4px;
    font: 24px/30px Roboto, sans-serif;
    color: #e4f4f6;
    text-shadow: 1px 1px 1px #557;
}
.notes {
    position: absolute;
    inset: 0;
    width: 100%;
    height: 100%;
    fill: none;
    pointer-events: none;
}
```
